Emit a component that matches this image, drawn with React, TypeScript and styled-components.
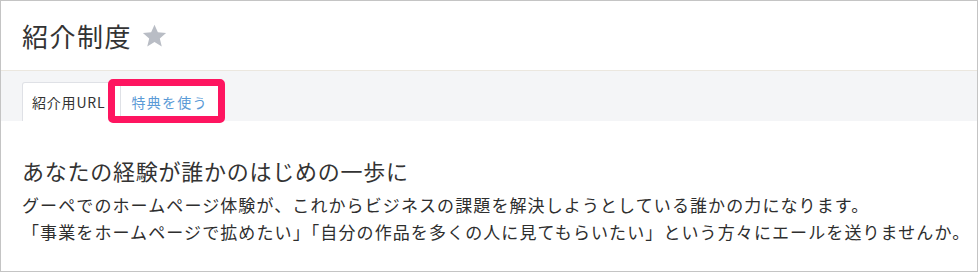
import React from "react";
import styled, { createGlobalStyle } from "styled-components";

const GlobalStyle = createGlobalStyle`
  html, body {
    margin: 0;
    padding: 0;
    background: #ffffff;
  }
  body {
    font-family: "Noto Sans CJK JP", "Noto Sans", sans-serif;
    color: #333333;
  }
`;

const Frame = styled.div`
  width: 978px;
  height: 272px;
  box-sizing: border-box;
  border: 1px solid #c4c4c4;
  background: #ffffff;
  overflow: hidden;
  display: flex;
  flex-direction: column;
`;

const Header = styled.header`
  height: 69px;
  flex-shrink: 0;
  border-bottom: 1px solid #ebe7df;
  display: flex;
  align-items: center;
  gap: 9px;
  padding: 0 0 0 21px;
`;

const Title = styled.h1`
  margin: 0;
  font-size: 26px;
  font-weight: 400;
  line-height: 34px;
  letter-spacing: 1.5px;
  color: #333333;
`;

const StarIcon = styled.svg`
  width: 27px;
  height: 26px;
  display: block;
  margin-top: 1px;
`;

const TabBar = styled.nav`
  height: 50px;
  flex-shrink: 0;
  background: #f4f5f7;
  display: flex;
  align-items: flex-end;
  padding: 0 0 0 21px;
  box-sizing: border-box;
`;

const Tab = styled.div<{ $active?: boolean }>`
  position: relative;
  height: 39px;
  box-sizing: border-box;
  display: flex;
  align-items: center;
  font-size: 14px;
  letter-spacing: ${(p) => (p.$active ? "0.8px" : "1.3px")};
  padding: ${(p) => (p.$active ? "0 15px 0 9px" : "0 10px 0 10px")};
  color: ${(p) => (p.$active ? "#333333" : "#5a9ad6")};
  background: #ffffff;
  border: ${(p) => (p.$active ? "1px solid #dfe1e6" : "none")};
  border-bottom: none;
  border-radius: ${(p) => (p.$active ? "3px 3px 0 0" : "0")};
`;

const Highlight = styled.span`
  position: absolute;
  left: -13px;
  top: -3px;
  right: -7px;
  bottom: -2px;
  border: 7px solid #fe1560;
  border-radius: 5px;
  pointer-events: none;
`;

const Content = styled.section`
  padding: 34px 0 0 21px;
`;

const Heading = styled.h2`
  margin: 0 0 6px;
  font-size: 22px;
  font-weight: 400;
  line-height: 30px;
  letter-spacing: 0.75px;
  color: #333333;
`;

const Paragraph = styled.p`
  margin: 0;
  font-size: 17px;
  line-height: 27px;
  letter-spacing: 1.1px;
  color: #2e2e2e;
  white-space: nowrap;
`;

export default function App() {
  return (
    <>
      <GlobalStyle />
      <Frame>
        <Header>
          <Title>紹介制度</Title>
          <StarIcon viewBox="0 0 24 24" aria-hidden="true">
            <path
              d="M12 1.5l3.1 7.1 7.6.6-5.8 5 1.8 7.5L12 17.6l-6.7 4.1 1.8-7.5-5.8-5 7.6-.6z"
              fill="#b9bdc5"
            />
          </StarIcon>
        </Header>
        <TabBar>
          <Tab $active>紹介用URL</Tab>
          <Tab>
            特典を使う
            <Highlight />
          </Tab>
        </TabBar>
        <Content>
          <Heading>あなたの経験が誰かのはじめの一歩に</Heading>
          <Paragraph>
            グーペでのホームページ体験が、これからビジネスの課題を解決しようとしている誰かの力になります。
          </Paragraph>
          <Paragraph>
            「事業をホームページで拡めたい」「自分の作品を多くの人に見てもらいたい」という方々にエールを送りませんか。
          </Paragraph>
        </Content>
      </Frame>
    </>
  );
}
